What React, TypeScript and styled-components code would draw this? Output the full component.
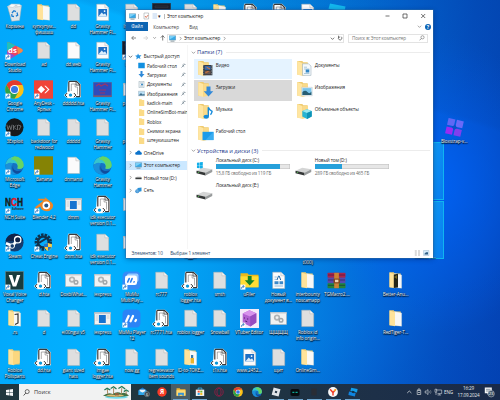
import type { ReactNode } from "react"
import styled, { createGlobalStyle } from "styled-components"

const GlobalStyle = createGlobalStyle`
* {
    box-sizing: border-box;
}
body {
    margin: 0;
    overflow: hidden;
    font-family: "Open Sans", "Noto Sans", sans-serif;
}
svg {
    display: block;
    flex-shrink: 0;
}
`

/* ---------- file and folder drawings ---------- */

const Page = ({ fill = "#dedfdf" }: { fill?: string }) => (
    <>
        <path d="M3.7 1.2h8.2l3.8 3.6v12.8h-12z" fill={fill} stroke="#b4b3ae" strokeWidth=".5" />
        <path d="M11.9 1.2v3.6h3.8" fill="#f6f6f6" stroke="#b4b3ae" strokeWidth=".5" />
    </>
)

const Hta = () => (
    <>
        <path d="M4 .8h9l4 3.8v12.6H7.5L3 14z" fill="#fff" />
        <path d="M4.8 11.5V2.3q0-1 1-1h6.6l3.5 3.5v11q0 .9-.9.9h-3" fill="none" stroke="#3b3b3b" strokeWidth="1.2" />
        <path d="M7.3 11V4h3.8v3h2.4v7.5" fill="none" stroke="#777" strokeWidth=".6" />
        <path d="M12 1.3v3.8h3.9" fill="none" stroke="#3b3b3b" strokeWidth=".8" />
        <path d="M-.2 15.1 3.4 12h6.4l3.6 3.1-3.6 3.1H3.4z" fill="#fff" />
        <path d="M3.2 13 1.1 15.1 3.2 17.2M9.8 13 11.9 15.1 9.8 17.2" fill="none" stroke="#333" strokeWidth="1" />
        <circle cx="6.5" cy="15.1" r="1.7" fill="#0b96d8" />
    </>
)

const Folder = ({ paper = true, children }: { paper?: boolean; children?: ReactNode }) => (
    <>
        <path d="M3.5 1.3h4.2l1 1.3h6v14H3.5z" fill="#edcb72" />
        {paper && <path d="M8.5 2.6 15.6 4v13.2l-7-.8z" fill="#f8f8f6" stroke="#ddd8c9" strokeWidth=".3" />}
        <path d="M3.5 1.6 9 3.4v13.8l-5.5-1.3z" fill="#ffe39a" />
        {!paper && <path d="M8 3.4h6.7v11.3L8 17z" fill="#fbd77f" />}
        {children}
    </>
)

const Photo = () => (
    <>
        <Page fill="#fbfbfb" />
        <rect x="5.3" y="6" width="8.8" height="7.5" fill="#1d6fc4" />
        <path d="m5.3 13.5 3.4-4 2 2 1.3-1.2 2.1 3.2z" fill="#dceefc" />
        <circle cx="11.6" cy="8.1" r=".9" fill="#fff" />
    </>
)

const AppWindow = () => (
    <>
        <rect x="1.4" y="3.4" width="16.2" height="12.2" fill="#f3f3f3" stroke="#9a9a9a" strokeWidth=".5" />
        <path d="M1.4 3.4h16.2v1.8H1.4z" fill="#c3cad1" />
        <path d="M5.9 6h6.9v8H5.9z" fill="#1673d0" />
        <path d="M2.6 7h2.4M2.6 9h2.4M2.6 11h2.4M13.8 7h2.6M13.8 9h2.6" stroke="#bbb" strokeWidth=".6" />
    </>
)

const Batch = () => (
    <>
        <rect x="1.4" y="3.4" width="16.2" height="12.2" fill="#f1f2f2" stroke="#a5a5a5" strokeWidth=".5" />
        <path d="M1.4 3.4h16.2v1.2H1.4z" fill="#cfd3d6" />
        <circle cx="8" cy="8.6" r="2.3" fill="none" stroke="#b0b4b6" strokeWidth="1.7" />
        <circle cx="12" cy="11.3" r="1.8" fill="none" stroke="#a2a7aa" strokeWidth="1.5" />
    </>
)

const Chrome = () => (
    <>
        <circle cx="9.5" cy="9.5" r="9.2" fill="#fbc116" />
        <path d="M1.5 4.9A9.2 9.2 0 0 1 17.5 4.9H9.5L5.5 11.8z" fill="#e33b2e" />
        <path d="M1.5 4.9A9.2 9.2 0 0 0 9.5 18.7l4-6.9h-8z" fill="#2da24c" />
        <circle cx="9.5" cy="9.5" r="4.5" fill="#fff" />
        <circle cx="9.5" cy="9.5" r="3.5" fill="#3478e5" />
    </>
)

const Edge = () => (
    <>
        <circle cx="9.5" cy="9.5" r="9.2" fill="#1573c4" />
        <path d="M.4 8.5A9.2 9.2 0 0 1 18.7 9c.1 3.4-3.2 4.6-6.3 3.5 1.5-2.2.2-5.4-3.5-5.4C5 7 2 8.5.4 8.5z" fill="#35c5ce" />
        <path d="M10 .3a9.2 9.2 0 0 1 8.7 9c0 3.2-3.6 4.2-6.3 3.2C14 9 11 3 6 3.6 7 1.5 8.5.5 10 .3z" fill="#66d565" />
        <path d="M8.2 7.5c-3 2.4-3.1 8.8 3.8 10.7C5.5 20 .5 15 .4 9.5c2-3 5.5-3.2 7.8-2z" fill="#1a8fd9" />
        <path d="M8.4 9.4c-1.5 4 2.3 7 8.7 4.8-1.6 2.7-4.4 3.6-5.8 3.4C7.8 16.3 6.3 12 8.4 9.4z" fill="#104d9d" />
    </>
)

const Mumu = () => (
    <>
        <rect x=".5" y=".5" width="18" height="18" rx="4.5" fill="#2b83f6" />
        <path d="M4.2 12.3 6.6 7M8.6 12.3 11 7M13.4 12 14 11" stroke="#fff" strokeWidth="2.3" strokeLinecap="round" />
    </>
)

const DeskArt = ({ kind }: { kind: string }) => {
    switch (kind) {
        case "bin":
            return (
                <>
                    <path d="m2.5 3.5 14-.7-2 14.6-7.8.9z" fill="#dfe6ea" stroke="#a5afb5" strokeWidth=".5" />
                    <path d="m2.5 3.5 4-2.5 8 .2 2 1.6-7 2z" fill="#f8fafa" stroke="#b8c0c4" strokeWidth=".5" />
                    <path d="m8 3.8 3-2 2.5 1.8" fill="#c3ccd2" />
                    <path d="m7 10 1.9-2.3 2 1M12 9.5l.7 2.6-1.8 1.2M9 13.5l-2-.4-.3-2" fill="none" stroke="#1d7dd1" strokeWidth="1.3" />
                </>
            )
        case "page":
            return <Page />
        case "white":
            return <Page fill="#fbfbfb" />
        case "hta":
            return <Hta />
        case "photo":
            return <Photo />
        case "folder":
            return <Folder />
        case "folderflat":
            return <Folder paper={false} />
        case "folderjs":
            return (
                <Folder>
                    <path d="M9.6 5.5 13 5v9l-3 1.5" fill="none" stroke="#333" strokeWidth="1.2" />
                </Folder>
            )
        case "folderdark":
            return (
                <Folder>
                    <path d="M7.8 3.5 12 2.7v13.7l-4.2.5z" fill="#242517" />
                    <path d="m8 6 3-2v4z" fill="#746724" />
                </Folder>
            )
        case "foldercode":
            return (
                <Folder>
                    <path d="M9.5 10h3.5v5.5H9.5z" fill="#eab42b" />
                    <path d="M10 7h2.2v3H10z" fill="#387cae" />
                </Folder>
            )
        case "window":
            return <AppWindow />
        case "batch":
            return <Batch />
        case "chrome":
            return <Chrome />
        case "edge":
            return <Edge />
        case "ds":
            return (
                <>
                    <path d="M2 2.4Q2 .3 4 1.2L17 8q1.7 1.5 0 3L5 17.7q-2 .8-2.5-1.2z" fill="#ef4360" />
                    <path d="M2 2.4Q2 .3 4 1.2l6.5 3.4L2.2 10z" fill="#20c2ba" />
                    <path d="m2.3 11 8 3.8L5 17.7q-2 .8-2.5-1.2z" fill="#8c50d2" />
                    <path d="m12 5.4 5 2.6q1.7 1.5 0 3l-4 2.2z" fill="#f38a45" />
                    <text x="3.1" y="12.3" fontSize="7.8" fontWeight="700" fill="#fff">ds</text>
                </>
            )
        case "anydesk":
            return (
                <>
                    <path d="M0 .3h19v18.4H0z" fill="#f04438" />
                    <path d="m7.2 5.8 3.8 3.7-3.8 3.7-3.7-3.7z" fill="#fff" />
                    <path d="m10.3 5.8 1.4-.1 3.8 3.8-3.8 3.8-1.4-.1 3.6-3.7z" fill="#fff" />
                </>
            )
        case "banner":
            return (
                <>
                    <path d="M.5 2.5h18v14.2H.5z" fill="#304bba" stroke="#6a5276" strokeWidth=".5" />
                    <path d="m3 6 3-2 2 2 4-2 3 2M6 10h7M7 13h5" fill="none" stroke="#9c3567" strokeWidth="1.1" />
                    <path d="M.5 15.5h18v1.2H.5z" fill="#955c58" />
                </>
            )
        case "exploit":
            return (
                <>
                    <circle cx="9.5" cy="9.3" r="9" fill="#181a1b" />
                    <path d="m1.8 6.7 1.3 5 1.4-4 1.4 4 1.2-5M8.5 7v5M8.7 9.3l2.6-2M9 9.3l2.5 2.5M12.5 7v5M13 7l3 1-2 4" fill="none" stroke="#858a8c" strokeWidth=".7" />
                </>
            )
        case "banana":
            return <path d="M0 .3h19v18.4H0z" fill="#858305" />
        case "nch":
            return (
                <>
                    <text x="0" y="11.3" fontFamily="Liberation Sans" fontSize="10.6" fontWeight="700" fill="#1c1c1c" textLength="18" lengthAdjust="spacingAndGlyphs" stroke="#1c1c1c" strokeWidth=".5">
                        N<tspan fill="#e21827" stroke="#e21827">C</tspan>H
                    </text>
                    <text x="7" y="15.4" fontSize="2.6" fontWeight="700" fill="#262626">Software</text>
                </>
            )
        case "blender":
            return (
                <>
                    <path d="m1 12.2 8.6-6.8H4.2V3.8h7.1l-1-2 7.3 5.6q2.6 2.5.6 6-2.8 3.7-7.8 2.4-3.4-1-4-4.3L2.5 13.7z" fill="#f18625" />
                    <circle cx="12.3" cy="10.4" r="3.8" fill="#fff" />
                    <circle cx="12.3" cy="10.4" r="2" fill="#265787" />
                </>
            )
        case "steam":
            return (
                <>
                    <circle cx="9.5" cy="9.5" r="9.1" fill="#163b6d" />
                    <path d="M.6 8a9.1 9.1 0 0 1 17.8 0z" fill="#11234a" />
                    <path d="m1 10.3 6.5 2.5 5-6" fill="none" stroke="#fff" strokeWidth="2.7" />
                    <circle cx="12.7" cy="6.7" r="3.2" fill="#11234a" stroke="#fff" strokeWidth="1.3" />
                    <circle cx="7.2" cy="13" r="2.3" fill="#163b6d" stroke="#fff" strokeWidth="1" />
                </>
            )
        case "cheat":
            return (
                <>
                    <circle cx="9.3" cy="9" r="7" fill="none" stroke="#10324d" strokeWidth="3.4" strokeDasharray="2.4 1" />
                    <circle cx="9.3" cy="9" r="5.4" fill="none" stroke="#10324d" strokeWidth="2.3" />
                    <path d="M5 9.8 13 5" stroke="#10324d" strokeWidth="2" />
                    <path d="m14 10 4 1.2q.2 5-4 6.9-4-2-4-6.9z" fill="#f7cc42" />
                    <path d="M14 10v4h-4v-2.8zM14 14h3.5q-.8 2.8-3.5 4.1z" fill="#2375c9" />
                </>
            )
        case "voice":
            return (
                <>
                    <path d="M.4.4h18.2v18.2H.4z" fill="#183c3e" stroke="#768d8e" strokeWidth=".6" />
                    <path d="M3.7 4h3.6l2.3 8 2.3-8h3.4l-4.1 11.5H7.8z" fill="#fff" />
                </>
            )
        case "mumu":
            return <Mumu />
        case "mumumulti":
            return (
                <>
                    <rect x=".5" y=".5" width="18" height="18" rx="4.5" fill="#358bf7" />
                    <rect x="5" y="2.5" width="11.5" height="8.5" rx="2" fill="#95c9ff" />
                    <rect x="3" y="4.5" width="12" height="9.5" rx="2.3" fill="#fff" />
                    <path d="m5.7 11 1.5-3.4M8.6 11l1.5-3.4M12 11l.1-.2" stroke="#287ff2" strokeWidth="1.6" strokeLinecap="round" />
                </>
            )
        case "ufiler":
            return (
                <>
                    <path d="M.5 2.2h7l1.3 1.5h9.7v12.6H.5z" fill="#eab91b" />
                    <path d="M.5 5.3h18v11H.5z" fill="#ffdc35" />
                    <path d="M7.8 5h3.8v4.3h3L9.7 14.6 4.8 9.3h3z" fill="#168324" />
                </>
            )
        case "vtuber":
            return (
                <>
                    <path d="M0 0h19v19H0z" fill="#f4eafa" />
                    <path d="m9.5 1.2 6.8 3v9.2l-6 4.2-7.6-3.8V4.6z" fill="#b060d1" />
                    <path d="m9.5 1.2 6.8 3-6.2 3.3-7.4-2.9z" fill="#d792ec" />
                    <path d="m10.1 7.5 6.2-3.3v9.2l-6 4.2z" fill="#974bc0" />
                    <path d="M4.4 8.4v1.2M7.7 9.4v1.2M5.2 12l2 .7" stroke="#532372" strokeWidth="1" />
                </>
            )
        case "doc":
            return (
                <>
                    <Page fill="#fcfcfc" />
                    <path d="M5.5 6h2.3M5.5 8.3h2.3M5.5 15h8.5" stroke="#73a9d6" strokeWidth=".8" />
                    <path d="m8 9 1.5-4h.7l1.5 4" fill="none" stroke="#1d69ad" />
                    <path d="M5.5 10.3h4v3h-4zM10.5 10.3h3.6v3h-3.6z" fill="#3b89c9" />
                </>
            )
        case "rar":
            return (
                <>
                    <rect x=".5" y="1.8" width="18" height="5" rx=".7" fill="#a9254e" />
                    <rect x=".5" y="7" width="18" height="5" rx=".7" fill="#5649ad" />
                    <rect x=".5" y="12.2" width="18" height="5" rx=".7" fill="#25823c" />
                    <path d="M1 4h17M1 9h17M1 14.3h17" stroke="#17132f" strokeWidth=".8" opacity=".55" />
                    <path d="M7.2 1.8h4.7v15.4H7.2z" fill="#cc8234" />
                    <path d="M6.5 7.6H13v4.8H6.5z" fill="#84481d" />
                    <path d="M8 8.7h3.4v2.5H8z" fill="#efd3b0" />
                </>
            )
        case "blox":
            return (
                <g transform="rotate(13 9.5 9.5)">
                    <path d="M1.6 1.5h7v7h-7z" fill="#5f68f5" />
                    <path d="M10.2 1.5h7v7h-7z" fill="#6a6af8" />
                    <path d="M1.6 10.2h7v7h-7z" fill="#9a2bf2" />
                    <path d="M10.2 10.2h7v7h-7z" fill="#8040ee" />
                    <path d="m9.4 6.6 2.8 2.8-2.8 2.8-2.8-2.8z" fill="#0a4fcb" />
                </g>
            )
        case "dark":
            return <path d="M.3.3h18.4v18H.3zM3 3h13v1.6H3z" fill="#1b1f2b" stroke="#393d46" strokeWidth=".6" />
        case "studio":
            return <path d="m3 .5 15.5 3-1 5L1.5 5.8z" fill="#12b6ec" />
        default:
            return null
    }
}

type DeskItem = [col: number, row: number, kind: string, label: string, shortcut?: boolean]

const deskItems: DeskItem[] = [
    [0, 0, "bin", "Корзина"],
    [1, 0, "folder", "купкупум...\nфишшш"],
    [2, 0, "page", "dd"],
    [3, 0, "photo", "Gravity\nHammer Fl..."],
    [4, 0, "page", "Image ..."],
    [5, 0, "dark", ""],
    [6, 0, "page", ""],
    [7, 0, "folder", ""],
    [8, 0, "hta", ""],
    [9, 0, "hta", ""],
    [10, 0, "photo", ""],
    [11, 0, "studio", ""],
    [0, 1, "ds", "Download\nStudio", true],
    [1, 1, "page", "ad"],
    [2, 1, "white", "dd.web"],
    [3, 1, "photo", "Gravity\nHammer Fl..."],
    [4, 1, "dark", "IPScan", true],
    [0, 2, "chrome", "Google\nChrome", true],
    [1, 2, "anydesk", "AnyDesk -\nЯрлык", true],
    [2, 2, "hta", "ddddd.hta"],
    [3, 2, "banner", "Gravity\nHammer Fl..."],
    [4, 2, "batch", "pc.sound"],
    [0, 3, "exploit", "3Exploit", true],
    [1, 3, "page", "backdoor for\nredwood"],
    [2, 3, "page", "ddddd"],
    [3, 3, "page", "Gravity\nHammer"],
    [4, 3, "none", "pc.sound"],
    [0, 4, "edge", "Microsoft\nEdge", true],
    [1, 4, "banana", "Banana", true],
    [2, 4, "white", "dnmansi"],
    [3, 4, "edge", "Gravity\nHammer"],
    [0, 5, "nch", "NCH Suite", true],
    [1, 5, "blender", "Blender 4.2", true],
    [2, 5, "window", "dmm"],
    [3, 5, "hta", "idk executor\nversion 0.1..."],
    [4, 5, "batch", ""],
    [0, 6, "steam", "Steam", true],
    [1, 6, "cheat", "Cheat Engine", true],
    [2, 6, "hta", "dnm.hta"],
    [3, 6, "page", "idk executor\nversion 0.1..."],
    [4, 6, "batch", ""],
    [6, 6, "none", "logger"],
    [10, 6, "none", "\nt000)"],
    [14, 6, "none", "Roblox-v..."],
    [0, 7, "voice", "Voxal Voice\nChanger", true],
    [1, 7, "hta", "d.hta"],
    [2, 7, "batch", "DoxbiWhat..."],
    [3, 7, "batch", "iexpress"],
    [4, 7, "mumumulti", "MuMu\nMultiPlay...", true],
    [5, 7, "page", "rc777"],
    [6, 7, "hta", "roblox\nlogger.hta"],
    [7, 7, "page", "smth"],
    [8, 7, "ufiler", "uFiler", true],
    [9, 7, "doc", "Новый\nдокумент в..."],
    [10, 7, "folder", "interbounty\nnoscamapp"],
    [11, 7, "rar", "TGMacro2...."],
    [13, 7, "folderdark", "Better-Anu..."],
    [0, 8, "folderjs", ".rs"],
    [1, 8, "page", "d"],
    [2, 8, "page", "ei00ngui v5"],
    [3, 8, "window", "iexpress"],
    [4, 8, "mumu", "MuMu Player\n12", true],
    [5, 8, "hta", "rc7771.hta"],
    [6, 8, "page", "roblox logger"],
    [7, 8, "page", "Snowball"],
    [8, 8, "vtuber", "VTuber Editor", true],
    [9, 8, "batch", "ЩЩЩЩ"],
    [10, 8, "page", "Roblox id\ninfo origin..."],
    [13, 8, "folder", "RedTiger-T..."],
    [0, 9, "folderflat", "Roblox\nPollsparts"],
    [1, 9, "hta", "dd.hta"],
    [2, 9, "page", "giant sized\nhats"],
    [3, 9, "hta", "Imgae\nlogger.hta"],
    [4, 9, "page", "now.gg"],
    [5, 9, "page", "regretevator\nitem sounds"],
    [6, 9, "foldercode", "ID-to-TOKE..."],
    [7, 9, "hta", "t1x.hta"],
    [8, 9, "photo", "www.2452..."],
    [9, 9, "page", "щит"],
    [10, 9, "folder", "OnlineSim..."],
    [15, 3, "blox", "Bloxstrap-v..."],
]

/* ---------- explorer data ---------- */

type NavItem = { label: string; icon: string; pin?: boolean }

const quickItems: NavItem[] = [
    { label: "Рабочий стол", icon: "desktop", pin: true },
    { label: "Загрузки", icon: "down", pin: true },
    { label: "Документы", icon: "docs", pin: true },
    { label: "Изображения", icon: "pics", pin: true },
    { label: "kadick-main", icon: "dir", pin: true },
    { label: "OnlineSimBot-main", icon: "dir" },
    { label: "Roblox", icon: "dir" },
    { label: "Снимки экрана", icon: "dir" },
    { label: "штеукишштен", icon: "dir" },
]

const rootItems: NavItem[] = [
    { label: "OneDrive", icon: "cloud" },
    { label: "Этот компьютер", icon: "pc" },
    { label: "Новый том (D:)", icon: "disk" },
    { label: "Сеть", icon: "net" },
]

const folderTiles = [
    { label: "Видео", icon: "video", tone: "#e5f3ff" },
    { label: "Документы", icon: "docs" },
    { label: "Загрузки", icon: "down", tone: "#d9d9d9" },
    { label: "Изображения", icon: "pics" },
    { label: "Музыка", icon: "music" },
    { label: "Объемные объекты", icon: "cube" },
    { label: "Рабочий стол", icon: "desktop" },
]

const drives = [
    { label: "Локальный диск (C:)", info: "15,8 ГБ свободно из 119 ГБ", used: 86.5, system: true },
    { label: "Новый том (D:)", info: "289 ГБ свободно из 465 ГБ", used: 37 },
    { label: "Локальный диск (E:)" },
]

const SmallIcon = ({ name }: { name: string }) => (
    <svg width="7" height="7" viewBox="0 0 14 14">
        {name === "star" && <path d="m6 1 2 3.5 5-.2-3.3 3.6L11 12 7 10l-4.5 3 1-5L0 5.5l4.5-.8z" fill="#2793df" />}
        {name === "desktop" && <path d="M.5 1.5h13v11H.5z" fill="#1290e0" />}
        {name === "down" && <path d="M5 0h4v6h4L7 13 1 6h4z" fill="#2f8ad8" />}
        {name === "docs" && (
            <>
                <path d="M2 .5h10v13H2z" fill="#f4f7f9" stroke="#8ba0ad" />
                <path d="M4 4h6M4 10h6" stroke="#6b8ba6" />
                <path d="M6 5.5h4v3H6z" fill="#3e8cc7" />
            </>
        )}
        {name === "pics" && (
            <>
                <path d="M.5 2.5h13v9H.5z" fill="#b9def4" stroke="#a5b3bb" />
                <path d="m1 11 5-5 3 3 4-1v3z" fill="#3c6d8b" />
            </>
        )}
        {name === "dir" && <path d="M2 .5h5l1 1.3h4.5v12H2z" fill="#fbdb87" />}
        {name === "cloud" && <path d="M3.5 11.5Q0 11.5.3 8.5.8 6 3.4 6 5 2 8.4 3.2q2.3.7 2.6 3 2.8.3 2.8 2.8 0 2.5-2.6 2.5z" fill="#0c73cb" />}
        {name === "pc" && (
            <>
                <path d="M.5 1.5h13v8.6H.5z" fill="#35a9e8" stroke="#7796a9" />
                <path d="M1 2h12L1 9z" fill="#7bd0f7" />
                <path d="M3 12.3h8" stroke="#71818c" strokeWidth="1.6" />
            </>
        )}
        {name === "disk" && (
            <>
                <path d="m2 6.8 2-1.6h7l2 1.6z" fill="#d5d5d5" />
                <path d="M.8 7h12.4v3.4H.8z" fill="#3a3d3d" />
            </>
        )}
        {name === "net" && (
            <>
                <path d="m5 2 8-1.2v7.7L5 10z" fill="#2b92d9" />
                <circle cx="4.5" cy="8.7" r="4" fill="#3c8ed2" />
                <path d="M1 8h7M4.4 5v7.5" stroke="#9bd3f3" strokeWidth=".9" />
            </>
        )}
    </svg>
)

const TileIcon = ({ name }: { name: string }) => (
    <svg width="17" height="19" viewBox="0 0 17 19">
        <path d="M1.3 2.1h5l1 1.2h4.4v12.5H1.3z" fill="#efcb70" />
        <path d="M1.3 2.1 6.2 4v13l-4.9-1.5z" fill="#ffe6a2" />
        <path d="M6.2 4h5.5v11.5L6.2 17z" fill="#fada89" />
        {name === "video" && (
            <>
                <path d="M6 6h9.4v10.3H6z" fill="#353a42" />
                <path d="M7.8 7h5.8v3.8H7.8z" fill="#3869ac" />
                <path d="M7.8 11.8h5.8v3.5H7.8z" fill="#6e574f" />
                <path d="M9.5 8.2 13 10M8.5 13.5l3-1" stroke="#e57a33" />
                <path d="M6.7 6v10.3M14.7 6v10.3" stroke="#b9c0c4" strokeWidth=".7" strokeDasharray=".8" />
            </>
        )}
        {name === "docs" && (
            <>
                <path d="M6.5 4.8h6L15 7v9.4H6.5z" fill="#f5f9fb" stroke="#91a7b5" strokeWidth=".5" />
                <path d="M8 8.2h3M8 10h5.4M8 14.5h5.4" stroke="#78a7c8" strokeWidth=".6" />
                <path d="M9.7 10.5h3.6v3H9.7z" fill="#3186c7" />
            </>
        )}
        {name === "down" && <path d="M9.5 6.5h4v4.8h2.8l-4.8 5.2-4.8-5.2h2.8z" fill="#3289d8" />}
        {name === "pics" && (
            <>
                <path d="M5.6 7.3h10.6v8.5H5.6z" fill="#f4f8fa" stroke="#a4b3bc" strokeWidth=".4" />
                <path d="M6.4 8.1h9v6.9h-9z" fill="#79c4eb" />
                <path d="M6.4 12q3-2.5 5 0t4-.5V15h-9z" fill="#285e73" />
            </>
        )}
        {name === "music" && (
            <>
                <path d="M11.3 5.3v9.2M11.3 5.3q.8 2.8 3.8 4-.2 2-1.6 3.4" fill="none" stroke="#158bdc" strokeWidth="1.4" />
                <ellipse cx="9.2" cy="14.8" rx="2.7" ry="2" fill="#158bdc" />
            </>
        )}
        {name === "cube" && (
            <>
                <path d="m11 7.3 4.7 1.7v5.5L11 17l-4.7-2.5V9z" fill="#28b4d2" />
                <path d="m11 7.3 4.7 1.7-4.7 2-4.7-2z" fill="#9be8ef" />
                <path d="M11 11v6l4.7-2.5V9z" fill="#0e93b7" />
            </>
        )}
        {name === "desktop" && (
            <>
                <path d="M5.5 7.8h11v8.3h-11z" fill="#1c9ceb" />
                <path d="M16.5 7.8v8.3l-8 0z" fill="#39adf1" />
            </>
        )}
    </svg>
)

const WinLogo = ({ color, size }: { color: string; size: number }) => (
    <svg width={size} height={size} viewBox="0 0 10 10">
        <path d="m0 1.4 4.6-.7v4H0zM5.2.6 10 0v4.7H5.2zM0 5.3h4.6v4L0 8.6zM5.2 5.3H10V10l-4.8-.7z" fill={color} />
    </svg>
)

const DriveIcon = ({ system }: { system?: boolean }) => (
    <svg width="17" height="16" viewBox="0 0 18 16">
        {system && <path d="m1 .4 2.8-.4v2.9H1zM4.2-.1 7.2-.5v3.4h-3zM1 3.3h2.8v2.9L1 5.8zM4.2 3.3h3v3.4l-3-.4z" fill="#12aee9" />}
        <path d="m.5 8.8 7.2-3.1 9.5 1.5-7.1 3.6z" fill="#d4d5d5" />
        <path d="m.5 8.8 9.6 2v2.9L.5 11.5z" fill="#343737" />
        <path d="m10.1 10.8 7.1-3.6v2.8l-7.1 3.7z" fill="#989b9c" />
        <path d="M2 10.5h1.3" stroke="#53cb52" strokeWidth=".9" />
    </svg>
)

const Chevron = ({ down, color = "#777" }: { down?: boolean; color?: string }) => (
    <svg width="5" height="5" viewBox="0 0 5 5">
        <path d={down ? "M.8 1.7 2.5 3.4 4.2 1.7" : "M1.7.9 3.3 2.5 1.7 4.1"} fill="none" stroke={color} strokeWidth=".65" />
    </svg>
)

const Pin = () => (
    <svg width="5" height="5" viewBox="0 0 5 5">
        <path d="M3 .5 4.5 2M3.5 1 2.2 2.4l.8.8M1.4 1.9l1.8 1.7M2.2 2.8.5 4.5" fill="none" stroke="#536776" strokeWidth=".6" />
    </svg>
)

/* ---------- taskbar drawings ---------- */

const TaskArt = ({ name }: { name: string }) => (
    <svg width="10" height="10" viewBox="0 0 19 19" overflow="visible">
        {name === "mail" && (
            <>
                <path d="M1 6 8.5 1 16 6v9H1z" fill="#1374c5" />
                <path d="M3 5h11v6H3z" fill="#eaf5fb" />
                <path d="m1 6 7.5 5L16 6v9H1z" fill="#2da5e9" />
                <circle cx="17" cy="13.5" r="5" fill="#3d4a51" stroke="#a7b0b4" strokeWidth=".7" />
                <text x="15" y="16.3" fontSize="7" fill="#fff">6</text>
            </>
        )}
        {name === "ya" && (
            <>
                <circle cx="9.5" cy="9.5" r="8.9" fill="#f63b25" />
                <text x="5.5" y="14" fontSize="12" fontWeight="700" fill="#fff">Я</text>
            </>
        )}
        {name === "explorer" && (
            <>
                <path d="M1 2.5h6l1.5 2H18v12H1z" fill="#eeb334" />
                <path d="M1 6h17v10.5H1z" fill="#ffda73" />
                <path d="M4 11h11v5.5h-3v-2H7v2H4z" fill="#3694d6" />
            </>
        )}
        {name === "store" && (
            <>
                <path d="M6 5V2h7v3" fill="none" stroke="#47b9ec" strokeWidth="1.5" />
                <path d="M1.5 5h16v12h-16z" fill="#f3f6f7" />
                <path d="M5 7h4v3.5H5z" fill="#ef5434" />
                <path d="M10 7h4v3.5h-4z" fill="#77b82b" />
                <path d="M5 11.5h4V15H5z" fill="#209ee6" />
                <path d="M10 11.5h4V15h-4z" fill="#f5b713" />
            </>
        )}
        {name === "opera" && (
            <>
                <circle cx="9.5" cy="9.5" r="8" fill="none" stroke="#961b43" strokeWidth="1.6" />
                <ellipse cx="9.5" cy="9.5" rx="4" ry="7.3" fill="none" stroke="#961b43" strokeWidth="1.5" />
            </>
        )}
        {name === "chrome" && <Chrome />}
        {name === "edge" && <Edge />}
        {name === "roblox" && (
            <>
                <path d="m5 1 13 3.4L14.5 18 1.3 14.6z" fill="#dfe4e8" />
                <path d="m8 7 4 1-1 4-4-1z" fill="#27394b" />
            </>
        )}
        {name === "app" && (
            <>
                <rect x="1" y="4" width="17" height="13" rx="3" fill="#070c0f" />
                <path d="M4.5 10h3.8M10.5 10h4" stroke="#10a995" strokeWidth="2.4" />
            </>
        )}
        {name === "ghost" && <path d="M4.5 3h10v13h-10z" fill="#292d35" />}
        {name === "browser" && (
            <>
                <circle cx="9.5" cy="9.5" r="9.3" fill="#f9f9f9" />
                <path d="m4 4.2 5.5 6.3 5.4-6.3M9.5 10v6" fill="none" stroke="#ef3b27" strokeWidth="2.8" />
                <path d="m12 7.5 3-3.3" stroke="#f4b322" strokeWidth="2.8" />
            </>
        )}
        {name === "rstudio" && (
            <>
                <path d="M6 1.2 18.3 4 17 10.5 4.5 7.7z" fill="#139de8" />
                <path d="m2 8.5 12.5 3-1.4 6.5L.7 15.1z" fill="#0f84e0" />
                <path d="m8 7 4.6 1-.9 4-4.6-1z" fill="#10334e" />
            </>
        )}
    </svg>
)

const tasks = [
    { name: "mail" },
    { name: "ya" },
    { name: "explorer", open: true, active: true },
    { name: "store", open: true },
    { name: "opera" },
    { name: "chrome" },
    { name: "edge" },
    { name: "roblox", open: true },
    { name: "app", open: true },
    { name: "ghost", open: true },
    { name: "browser", open: true },
    { name: "rstudio", open: true },
]

const SearchArt = () => (
    <svg width="28" height="14" viewBox="0 0 29 14">
        <ellipse cx="15" cy="12.3" rx="12" ry="1.6" fill="#6fdaeb" />
        <path d="M1 11q5-4 10-2 5-3 9-.5 4-2 8 2.5-7 1.3-13 1-8 .4-14-1z" fill="#427044" />
        <path d="M4 11q5-2.4 10-.7 5-1.5 9 .7-9 1.8-19 0z" fill="#dfba73" />
        <path d="M6 9.5 5.5 4M12 9V3M20 9l.5-6M25 10V6" stroke="#966b3a" strokeWidth=".8" />
        <path d="m2.5 5 2.8-1.8L8.6 5M9 3.4l3-1.8L15 4M17 3.3l3.5-2L24 4M22.6 6.6 25 5l2.7 1.5" fill="none" stroke="#277754" strokeWidth="1.3" />
        <path d="M13.5 8h4v2.5h-4z" fill="#8e633d" />
    </svg>
)

export default function App() {
    return (
        <Screen>
            <GlobalStyle />
            <Wallpaper />
            <LightPane $top={142} $height={57.5} />
            <LightPane $top={201.3} $height={58} />
            <Desktop>
                {deskItems.map(([col, row, kind, label, shortcut]) => (
                    <Shortcut key={`${col}-${row}`} $col={col + 1} $row={row + 1}>
                        <svg width="19" height="19" viewBox="0 0 19 19">
                            <DeskArt kind={kind} />
                            {shortcut && (
                                <>
                                    <path d="M.4 13.6h5v5h-5z" fill="#fff" />
                                    <path d="M1.4 17.7q0-2.3 2.2-2.3M2.7 14.2l1.6 1.2-1.5 1.3" fill="none" stroke="#1462b5" strokeWidth=".8" />
                                </>
                            )}
                        </svg>
                        <ShortcutName>{label}</ShortcutName>
                    </Shortcut>
                ))}
            </Desktop>

            <Explorer>
                <TitleBar>
                    <SmallIcon name="pc" />
                    <Divider />
                    <svg width="18" height="8" viewBox="0 0 18 8">
                        <path d="M3 1h4.6v6H3z" fill="#fff" stroke="#8d9498" strokeWidth=".5" />
                        <path d="m4 4 1.2 1.5L7.2 3" fill="none" stroke="#d25c3b" strokeWidth=".8" />
                        <path d="M11.5 1h4.6v6h-4.6z" fill="#dce8f7" />
                    </svg>
                    <QuickArrow>▾</QuickArrow>
                    <Divider />
                    <Title>Этот компьютер</Title>
                    <svg width="42" height="6" viewBox="0 0 42 6">
                        <path d="M1.5 3h4M19 1h4v4h-4zM37.2 1l4 4M41.2 1l-4 4" fill="none" stroke="#333" strokeWidth=".7" />
                    </svg>
                </TitleBar>
                <Ribbon>
                    <FileTab>Файл</FileTab>
                    <Tab>Компьютер</Tab>
                    <Tab>Вид</Tab>
                    <RibbonEnd>
                        <Chevron down />
                        <Help>?</Help>
                    </RibbonEnd>
                </Ribbon>
                <AddressRow>
                    <svg width="39" height="6" viewBox="0 0 39 6">
                        <path d="M5 3H.8M2.6 1 .7 3l1.9 2" fill="none" stroke="#555" strokeWidth=".7" />
                        <path d="M12.5 3h4.2M14.8 1l1.9 2-1.9 2" fill="none" stroke="#c6c6c6" strokeWidth=".7" />
                        <path d="m22.3 2.2 1.3 1.3 1.3-1.3" fill="none" stroke="#666" strokeWidth=".6" />
                        <path d="M31.7 5.5v-5M29.8 2.6 31.7.7l1.9 1.9" fill="none" stroke="#444" strokeWidth=".7" />
                    </svg>
                    <AddressBox>
                        <SmallIcon name="pc" />
                        <Chevron />
                        <span>Этот компьютер</span>
                        <Chevron />
                        <AddressEnd>
                            <Chevron down color="#333" />
                            <svg width="6" height="6" viewBox="0 0 6 6">
                                <path d="M4.2 1.7A1.8 1.8 0 1 1 1.9 1.8M1.5.7v1.5h1.6" fill="none" stroke="#333" strokeWidth=".6" />
                            </svg>
                        </AddressEnd>
                    </AddressBox>
                    <SearchBox>
                        Поиск в: Этот компьютер
                        <svg width="6" height="6" viewBox="0 0 6 6">
                            <circle cx="3.5" cy="2.3" r="1.6" fill="none" stroke="#555" strokeWidth=".5" />
                            <path d="M2.3 3.5.6 5.3" stroke="#555" strokeWidth=".6" />
                        </svg>
                    </SearchBox>
                </AddressRow>
                <Body>
                    <Nav>
                        <RootRow>
                            <Chevron down color="#333" />
                            <SmallIcon name="star" />
                            <span>Быстрый доступ</span>
                        </RootRow>
                        {quickItems.map((item) => (
                            <QuickRow key={item.label}>
                                <SmallIcon name={item.icon} />
                                <span>{item.label}</span>
                                {item.pin && <Pin />}
                            </QuickRow>
                        ))}
                        <RootList>
                            {rootItems.map((item) => (
                                <RootRow key={item.label} $selected={item.icon === "pc"}>
                                    <Chevron />
                                    <SmallIcon name={item.icon} />
                                    <span>{item.label}</span>
                                </RootRow>
                            ))}
                        </RootList>
                    </Nav>
                    <Content>
                        <GroupTitle>
                            <Chevron down />
                            Папки (7)
                        </GroupTitle>
                        <Tiles>
                            {folderTiles.map((tile) => (
                                <Tile key={tile.label} $tone={tile.tone}>
                                    <TileIcon name={tile.icon} />
                                    <span>{tile.label}</span>
                                </Tile>
                            ))}
                        </Tiles>
                        <GroupTitle>
                            <Chevron down />
                            Устройства и диски (3)
                        </GroupTitle>
                        <DriveGrid>
                            {drives.map((drive) => (
                                <Drive key={drive.label}>
                                    <DriveIcon system={drive.system} />
                                    <DriveText>
                                        <span>{drive.label}</span>
                                        {drive.info && (
                                            <>
                                                <Meter>
                                                    <MeterFill style={{ width: `${drive.used}%` }} />
                                                </Meter>
                                                <DriveInfo>{drive.info}</DriveInfo>
                                            </>
                                        )}
                                    </DriveText>
                                </Drive>
                            ))}
                        </DriveGrid>
                    </Content>
                </Body>
                <StatusBar>
                    <span>Элементов: 10</span>
                    <span>Выбран 1 элемент</span>
                    <svg width="16" height="6" viewBox="0 0 16 6">
                        <path d="M.8 1h2M.8 3h2M.8 5h2M4 1h2M4 3h2M4 5h2" stroke="#999" strokeWidth=".7" />
                        <path d="M9.5.5h5.5v5H9.5z" fill="#d4eaf9" stroke="#a0bdd2" strokeWidth=".5" />
                        <path d="M10.5 3.8 12 2.3h2v2.3h-3.5z" fill="#315f86" />
                    </svg>
                </StatusBar>
            </Explorer>

            <Taskbar>
                <Start>
                    <WinLogo color="#f4f6f7" size={7} />
                </Start>
                <TaskSearch>
                    <svg width="7" height="7" viewBox="0 0 7 7">
                        <circle cx="4.2" cy="2.6" r="2" fill="none" stroke="#333" strokeWidth=".7" />
                        <path d="M2.8 4.1.6 6.5" stroke="#333" strokeWidth=".8" />
                    </svg>
                    <span>Поиск</span>
                    <SearchArt />
                </TaskSearch>
                <TaskList>
                    {tasks.map((task) => (
                        <Task key={task.name} $open={task.open} $active={task.active}>
                            <TaskArt name={task.name} />
                        </Task>
                    ))}
                </TaskList>
                <Tray>
                    <svg width="38" height="8" viewBox="0 0 38 8">
                        <path d="M1.2 5 3.3 3l2.1 2" fill="none" stroke="#e7e9ea" strokeWidth=".7" />
                        <path d="M11.2 2.5h3.5v4h-3.5zM12 2.5V1h2v1.5M12 4.5h2" fill="none" stroke="#d3d7da" strokeWidth=".7" />
                        <path d="M19.2 3h1.2L22 1.6v5L20.4 5h-1.2z" fill="none" stroke="#e2e5e7" strokeWidth=".6" />
                        <path d="M23.2 3q.8 1 0 2M24.4 2.2q1.4 1.8 0 3.6" fill="none" stroke="#a0a9b1" strokeWidth=".5" />
                        <path d="M30 2h5.7v3.6h-4.2M33.3 5.6v1.3M31.5 7H35M29 1.2h1.7v3H29zM30 4.2V7" fill="none" stroke="#d8dce0" strokeWidth=".6" />
                    </svg>
                    <Lang>ENG</Lang>
                    <Clock>
                        <span>16:29</span>
                        <span>17.09.2024</span>
                    </Clock>
                    <svg width="11" height="12" viewBox="0 0 11 12">
                        <path d="M.8 1.5h7v5.7H5L3.5 8.7V7.2H.8z" fill="#f4f5f6" />
                        <path d="M2 3.3h4.5M2 5h4.5" stroke="#42566c" strokeWidth=".6" />
                        <circle cx="7.2" cy="7.8" r="3.2" fill="#394a5e" stroke="#c8ced4" strokeWidth=".5" />
                        <text x="4.7" y="9.4" fontSize="4.2" fill="#fff">23</text>
                    </svg>
                </Tray>
            </Taskbar>
        </Screen>
    )
}

const Screen = styled.div`
position: relative;
display: flex;
flex-direction: column;
width: 500px;
height: 400px;
overflow: hidden;
`

const Wallpaper = styled.div`
position: absolute;
inset: 0;
background:
    linear-gradient(197deg, rgba(0, 60, 150, 0.28) 0%, rgba(0, 60, 150, 0.1) 23%, transparent 24%),
    radial-gradient(ellipse 120px 150px at 436px 185px, rgba(0, 100, 255, 0.75), transparent),
    linear-gradient(160deg, transparent 77%, rgba(0, 62, 170, 0.28) 100%),
    linear-gradient(95deg, #02a8fb 0%, #02b0ff 24%, #02a4f5 37%, #0388e6 58%, #0467d6 76%, #0450c3 89%, #0443b5 100%);
`

const LightPane = styled.div<{ $top: number; $height: number }>`
position: absolute;
left: 424px;
top: ${(p) => p.$top}px;
width: 20px;
height: ${(p) => p.$height}px;
border: 1px solid #10b5ef;
background: linear-gradient(100deg, #12a6f5, #087cf0);
`

const Desktop = styled.div`
position: relative;
display: grid;
flex: 1;
grid-template-columns: repeat(17, 29.3px);
grid-template-rows: repeat(10, 38.27px);
min-height: 0;
`

const Shortcut = styled.div<{ $col: number; $row: number }>`
grid-column: ${(p) => p.$col};
grid-row: ${(p) => p.$row};
display: flex;
flex-direction: column;
align-items: center;
padding-top: 3.2px;
`

const ShortcutName = styled.span`
margin-top: 0.9px;
font-size: 4.6px;
line-height: 6px;
letter-spacing: -0.1px;
text-align: center;
white-space: pre;
color: #f2f5f7;
text-shadow: 0 0 1px #001a33, 0.4px 0.5px 1px #001a33, 0.5px 0.5px 1px #001a33;
`

const Explorer = styled.section`
position: absolute;
left: 126px;
top: 10px;
display: flex;
flex-direction: column;
width: 307px;
height: 247.5px;
background: #fff;
color: #1c1c1c;
font-size: 4.65px;
line-height: 6px;
letter-spacing: -0.05px;
white-space: nowrap;
box-shadow: 0 0 0 0.5px #2a6da8, 0 1px 5px rgba(0, 20, 70, 0.45);
`

const TitleBar = styled.div`
display: flex;
align-items: center;
height: 12px;
padding: 0 7px 0 3px;
`

const Divider = styled.i`
width: 1px;
height: 5px;
margin: 0 2px;
background: #bbb;
`

const QuickArrow = styled.span`
width: 5px;
margin-left: -1px;
margin-right: -1px;
font-size: 5px;
`

const Title = styled.span`
flex: 1;
`

const Ribbon = styled.div`
display: flex;
align-items: center;
height: 9.5px;
color: #444;
`

const FileTab = styled.div`
width: 22px;
height: 9px;
background: #0d65b3;
color: #fff;
line-height: 9px;
text-align: center;
`

const Tab = styled.div`
margin-left: 5.3px;
margin-right: 5px;
`

const RibbonEnd = styled.div`
display: flex;
align-items: center;
gap: 3px;
margin-left: auto;
padding-right: 2px;
`

const Help = styled.span`
width: 6.4px;
height: 6.4px;
border-radius: 50%;
background: #0b62b5;
color: #fff;
font-size: 5px;
font-weight: 700;
line-height: 6.4px;
text-align: center;
`

const AddressRow = styled.div`
display: flex;
align-items: center;
height: 13px;
padding: 0 5.5px 0 5px;
`

const AddressBox = styled.div`
display: flex;
align-items: center;
gap: 1.5px;
width: 177px;
height: 9px;
margin-left: -3px;
padding-left: 1px;
border: 1px solid #e3e3e3;
`

const AddressEnd = styled.div`
display: flex;
align-items: center;
gap: 2px;
margin-left: auto;
`

const SearchBox = styled.div`
display: flex;
align-items: center;
justify-content: space-between;
width: 79.5px;
height: 9px;
margin-left: auto;
padding: 0 2px 0 3px;
border: 1px solid #e3e3e3;
color: #757575;
letter-spacing: -0.13px;
`

const Body = styled.div`
display: flex;
flex: 1;
min-height: 0;
`

const Nav = styled.nav`
width: 61.3px;
padding-top: 7px;
overflow: hidden;
`

const RootRow = styled.div<{ $selected?: boolean }>`
display: flex;
align-items: center;
height: 9.35px;
padding-left: 2px;
background: ${(p) => (p.$selected ? "#cce8ff" : "transparent")};

svg + svg {
    margin: 0 1.5px 0 2.3px;
}
`

const QuickRow = styled.div`
display: flex;
align-items: center;
height: 9.37px;
padding-left: 12.2px;

span {
    margin-left: 1.7px;
}
svg + span + svg {
    margin: 0 1px 0 auto;
}
`

const RootList = styled.div`
display: flex;
flex-direction: column;
gap: 3.15px;
padding-top: 3.2px;
`

const Content = styled.main`
flex: 1;
padding: 3.6px 3px 0 3.2px;
border-left: 1px solid #f6f6f6;
`

const GroupTitle = styled.h2`
display: flex;
align-items: center;
gap: 0.6px;
height: 8px;
margin: 0;
color: #22398b;
font-size: 5.7px;
font-weight: 400;
letter-spacing: -0.05px;

&::after {
    content: "";
    flex: 1;
    height: 1px;
    margin-left: 3px;
    background: #ececec;
}
`

const Tiles = styled.div`
display: grid;
grid-template-columns: 98px 98px;
grid-auto-rows: 20.8px;
gap: 1.1px;
margin: 2.5px 0 1.7px 2.5px;
letter-spacing: -0.1px;
`

const Tile = styled.div<{ $tone?: string }>`
display: flex;
padding: 0 0 0 3.2px;
background: ${(p) => p.$tone || "transparent"};

span {
    margin: 3.3px 0 0 1.6px;
}
`

const DriveGrid = styled.div`
display: grid;
grid-template-columns: 99.1px 99.1px;
grid-auto-rows: 24.6px;
margin: 2.4px 0 0 4.6px;
letter-spacing: -0.12px;
`

const Drive = styled.div`
display: flex;

> svg {
    margin-top: 4.4px;
}
`

const DriveText = styled.div`
display: flex;
flex-direction: column;
width: 74px;
margin-left: 2.7px;
`

const Meter = styled.div`
height: 5px;
margin: 0.7px 0 0.8px;
background: #e6e6e6;
box-shadow: inset 0 0 0 0.5px #bcbcbc;
`

const MeterFill = styled.div`
height: 100%;
background: #26a0da;
`

const DriveInfo = styled.span`
color: #6d6d6d;
letter-spacing: -0.2px;
`

const StatusBar = styled.footer`
display: flex;
align-items: center;
gap: 7.5px;
height: 9px;
padding: 0 3px 0 5.5px;
color: #29486b;
letter-spacing: -0.1px;

svg {
    margin-left: auto;
}
`

const Taskbar = styled.footer`
position: relative;
display: flex;
width: 500px;
height: 16px;
background: linear-gradient(90deg, #20373f 0%, #203540 45%, #1d3048 75%, #192a4a 100%);
`

const Start = styled.div`
display: flex;
align-items: center;
justify-content: center;
width: 19px;
`

const TaskSearch = styled.div`
display: flex;
align-items: center;
width: 112px;
padding: 0 1px 0 4px;
background: #f1f2f2;
color: #333;
font-size: 5.6px;

span {
    flex: 1;
    margin-left: 4px;
}
`

const TaskList = styled.div`
display: flex;
padding-left: 2px;
`

const Task = styled.div<{ $open?: boolean; $active?: boolean }>`
position: relative;
display: flex;
align-items: center;
justify-content: center;
width: 19.1px;
background: ${(p) => (p.$active ? "#4a5d66" : "transparent")};

&::after {
    content: "";
    position: absolute;
    left: 2px;
    right: 2px;
    bottom: 0;
    height: 1px;
    background: ${(p) => (p.$open ? "#6fa6cf" : "transparent")};
}
`

const Tray = styled.div`
display: flex;
align-items: center;
margin-left: auto;
padding-right: 5px;
color: #e9ecee;
font-size: 4.6px;
letter-spacing: -0.12px;
`

const Lang = styled.span`
margin-right: 1px;
`

const Clock = styled.div`
display: flex;
flex-direction: column;
align-items: center;
width: 25px;
margin: 0 3px 0 2px;
line-height: 7px;
`
